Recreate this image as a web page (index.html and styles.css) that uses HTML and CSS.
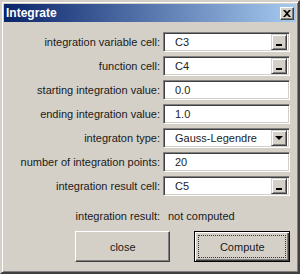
FILE: index.html
```html
<!DOCTYPE html>
<html lang="en">
<head>
  <meta charset="UTF-8">
  <title>Integrate</title>
  <link rel="stylesheet" href="styles.css">
</head>
<body>
  <div class="window">
    <div class="titlebar">
      <span class="title">Integrate</span>
      <span class="tbtn">
        <svg width="8" height="7" viewBox="0 0 8 7"><path d="M0 0h2l2 2 2-2h2l-3 3.5 3 3.5h-2l-2-2-2 2h-2l3-3.5z" fill="#000"/></svg>
      </span>
    </div>

    <div class="content">
      <div class="form">
        <label>integration variable cell:</label>
        <div class="field"><span class="val">C3</span><span class="fbtn"><i class="dash"></i></span></div>

        <label>function cell:</label>
        <div class="field"><span class="val">C4</span><span class="fbtn"><i class="dash"></i></span></div>

        <label>starting integration value:</label>
        <div class="field"><span class="val">0.0</span></div>

        <label>ending integration value:</label>
        <div class="field"><span class="val">1.0</span></div>

        <label>integraton type:</label>
        <div class="field"><span class="val">Gauss-Legendre</span><span class="fbtn"><i class="arrow"></i></span></div>

        <label>number of integration points:</label>
        <div class="field"><span class="val">20</span></div>

        <label>integration result cell:</label>
        <div class="field"><span class="val">C5</span><span class="fbtn"><i class="dash"></i></span></div>

        <label class="plain">integration result:</label>
        <div class="result">not computed</div>
      </div>

      <div class="buttons">
        <button class="btn">close</button>
        <button class="btn default"><span class="focus">Compute</span></button>
      </div>
    </div>
  </div>
</body>
</html>
```

FILE: styles.css
```css
/* Win2000 style dialog */
body {
  margin: 0;
  font-family: "Liberation Sans", Arial, sans-serif;
  font-size: 11px;
  color: #1a1a1a;
}

.window {
  width: 300px;
  height: 274px;
  box-sizing: border-box;
  background: #d4d0c8;
  border: 2px solid;
  border-color: #d4d0c8 #404040 #404040 #d4d0c8;
  box-shadow: inset 1px 1px 0 #fff, inset -1px -1px 0 #808080;
  padding: 2px;
  display: flex;
  flex-direction: column;
}

.titlebar {
  height: 18px;
  background: linear-gradient(to right, #0a246a, #a6caf0);
  display: flex;
  align-items: center;
  justify-content: space-between;
  padding: 0 2px 0 2px;
}

.title {
  color: #fff;
  font-weight: bold;
  font-size: 12px;
  font-family: "Liberation Sans", Arial, sans-serif;
}

.tbtn {
  width: 14px;
  height: 13px;
  box-sizing: border-box;
  background: #d4d0c8;
  border: 1px solid;
  border-color: #fff #404040 #404040 #fff;
  box-shadow: inset -1px -1px 0 #808080;
  display: flex;
  align-items: center;
  justify-content: center;
}

.content {
  padding: 10px 6px 0 0;
}

.form {
  display: grid;
  grid-template-columns: 1fr 127px;
  column-gap: 3px;
  row-gap: 4px;
  align-items: center;
}

.form label {
  text-align: right;
}

.field {
  height: 20px;
  box-sizing: border-box;
  background: #fff;
  border: 1px solid;
  border-color: #808080 #fff #fff #808080;
  box-shadow: inset 1px 1px 0 #404040, inset -1px -1px 0 #d4d0c8;
  padding: 2px;
  display: flex;
  align-items: center;
}

.val {
  flex: 1;
  padding-left: 9px;
  font-size: 11px;
  color: #222;
}

.fbtn {
  width: 16px;
  height: 16px;
  box-sizing: border-box;
  background: #d4d0c8;
  border: 1px solid;
  border-color: #d4d0c8 #404040 #404040 #d4d0c8;
  box-shadow: inset 1px 1px 0 #fff, inset -1px -1px 0 #808080;
  display: flex;
  align-items: flex-end;
  justify-content: center;
  padding-bottom: 3px;
}

.dash {
  width: 6px;
  height: 2px;
  background: #000;
}

.arrow {
  width: 0;
  height: 0;
  border-left: 4px solid transparent;
  border-right: 4px solid transparent;
  border-top: 4px solid #000;
  margin-bottom: 2px;
}

.form .plain {
  margin-top: 10px;
}

.result {
  margin-top: 10px;
  padding-left: 5px;
}

.buttons {
  display: flex;
  gap: 24px;
  margin: 9px 0 0 71px;
}

.btn {
  width: 96px;
  height: 31px;
  box-sizing: border-box;
  background: #d4d0c8;
  font-family: "Liberation Sans", Arial, sans-serif;
  font-size: 11px;
  color: #1a1a1a;
  border: 1px solid;
  border-color: #fff #404040 #404040 #fff;
  box-shadow: inset -1px -1px 0 #808080;
  padding: 0;
}

.btn.default {
  border: 1px solid #000;
  box-shadow: inset 1px 1px 0 #fff, inset -1px -1px 0 #404040, inset -2px -2px 0 #808080;
  padding: 3px;
  display: flex;
}

.focus {
  flex: 1;
  border: 1px dotted #333;
  display: flex;
  align-items: center;
  justify-content: center;
}
```
